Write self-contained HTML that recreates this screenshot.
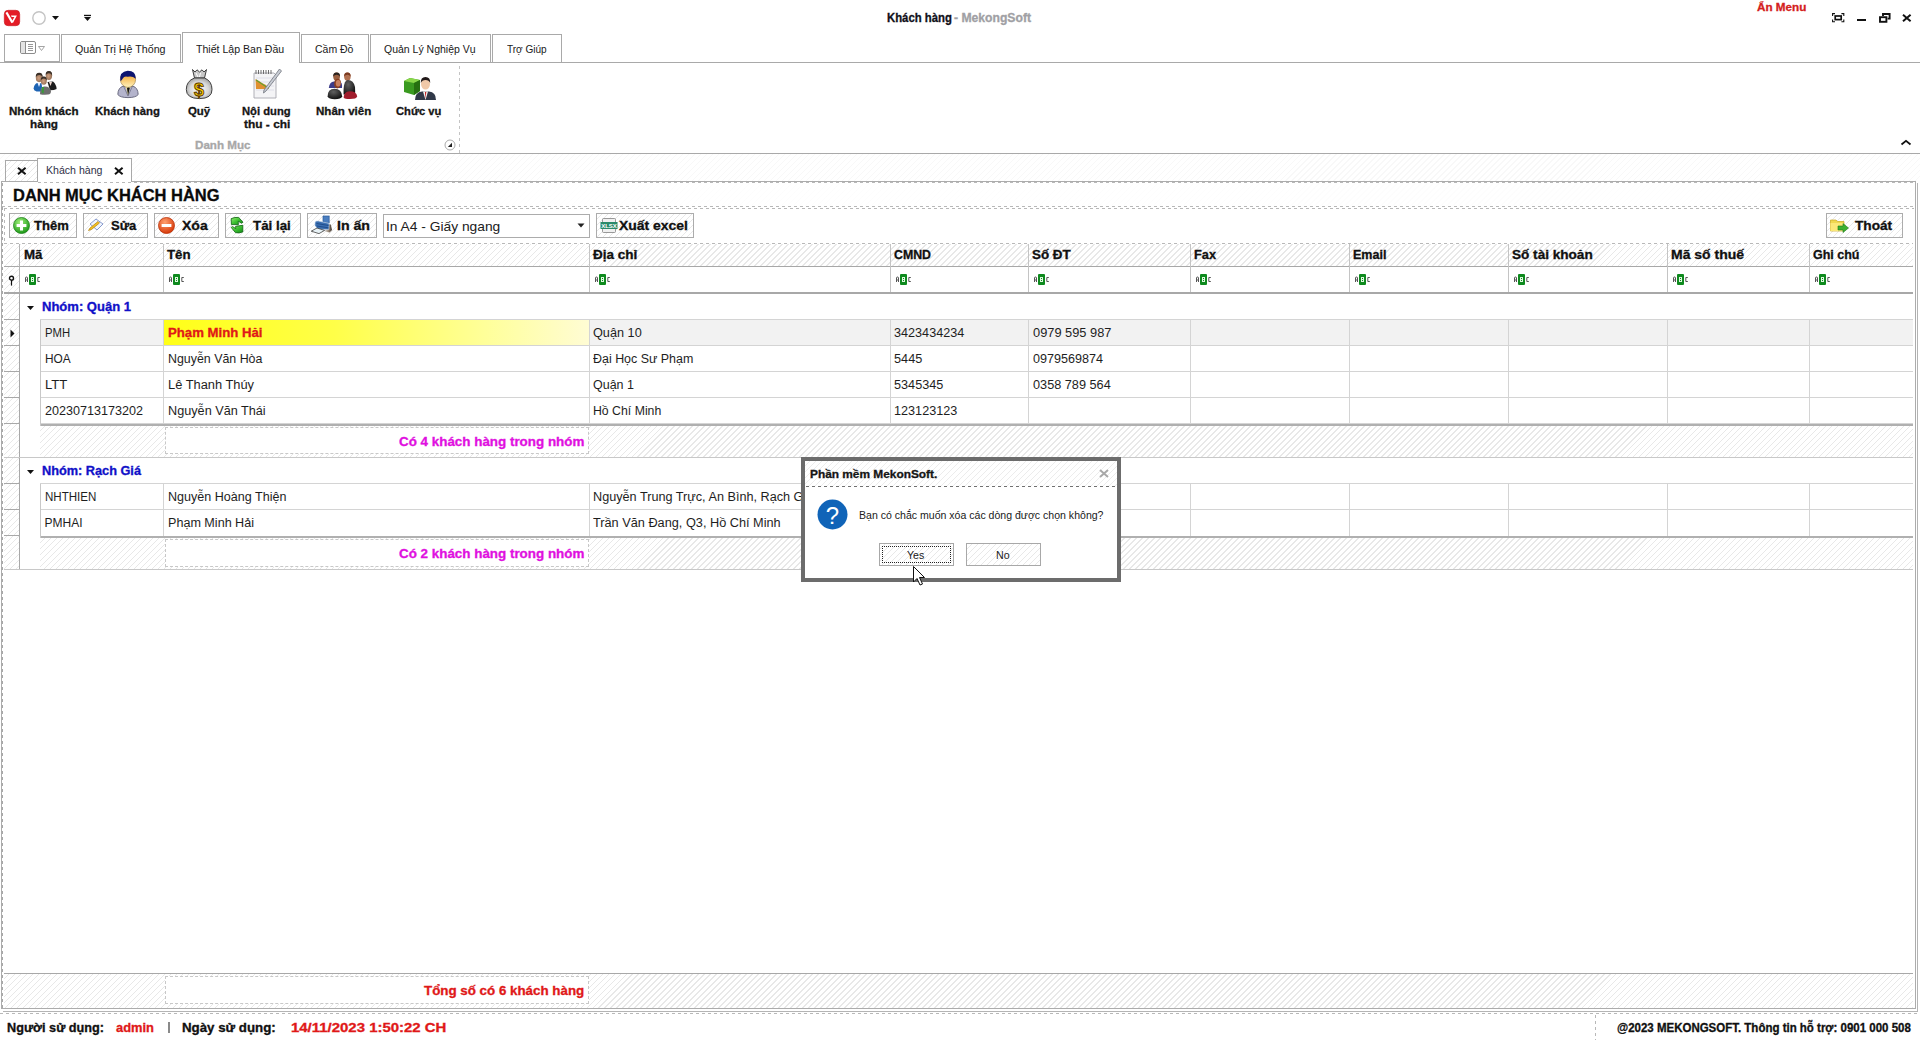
<!DOCTYPE html>
<html><head><meta charset="utf-8">
<style>
html,body{margin:0;padding:0}
body{width:1920px;height:1040px;position:relative;overflow:hidden;background:#fff;font-family:"Liberation Sans",sans-serif}
.t{position:absolute;white-space:pre;font-family:"Liberation Sans",sans-serif}
.b{position:absolute;box-sizing:border-box}
.hatch{background:repeating-linear-gradient(135deg,#ffffff 0px,#ffffff 3.1px,#e8e8e8 3.1px,#e8e8e8 4.24px)}
.hatchl{background:repeating-linear-gradient(135deg,#ffffff 0px,#ffffff 3.4px,#f8f8f8 3.4px,#f8f8f8 4.24px)}
.hl{position:absolute;height:1px}
.vl{position:absolute;width:1px}
.dh{position:absolute;height:1px;background:repeating-linear-gradient(90deg,#b8b8b8 0 3px,transparent 3px 6px)}
.dv{position:absolute;width:1px;background:repeating-linear-gradient(180deg,#b8b8b8 0 3px,transparent 3px 6px)}
svg{position:absolute;overflow:visible}
</style></head>
<body>
<!-- ================= TITLE BAR ================= -->
<svg style="left:4px;top:10px" width="16" height="16" viewBox="0 0 16 16">
  <rect x="0.3" y="0.3" width="15.4" height="15.4" rx="3.8" fill="#e41c26" stroke="#c8141c" stroke-width="0.6"/>
  <path d="M2.4 2.4 L8.4 12.6" fill="none" stroke="#fff" stroke-width="2.1"/>
  <path d="M7 5.6 H12.9 L8.9 12.9 L7.9 11.2 L10.4 7.1 H7.6 Z" fill="#fff"/>
</svg>
<svg style="left:32px;top:11px" width="14" height="14" viewBox="0 0 14 14">
  <circle cx="7" cy="7" r="6.2" fill="none" stroke="#c4c4c4" stroke-width="1.4"/>
</svg>
<svg style="left:52px;top:16px" width="8" height="5" viewBox="0 0 8 5"><path d="M0 0 H7 L3.5 4 Z" fill="#111"/></svg>
<svg style="left:84px;top:14px" width="8" height="8" viewBox="0 0 8 8"><rect x="0" y="0.8" width="7" height="1.3" fill="#111"/><path d="M0 3 H7 L3.5 7 Z" fill="#111"/></svg>
<!-- window buttons -->
<svg style="left:1832px;top:13px" width="13" height="10" viewBox="0 0 13 10">
  <path d="M0.6 3 V0.6 H3 M9.4 0.6 H11.8 V3 M11.8 6.4 V8.8 H9.4 M3 8.8 H0.6 V6.4" fill="none" stroke="#111" stroke-width="1.1"/>
  <rect x="3.2" y="3" width="6" height="3.6" fill="none" stroke="#111" stroke-width="1.7"/>
</svg>
<div class="b" style="left:1857px;top:19px;width:9px;height:2px;background:#111"></div>
<svg style="left:1879px;top:13px" width="12" height="10" viewBox="0 0 12 10">
  <rect x="1" y="4.2" width="6.4" height="4.6" fill="none" stroke="#111" stroke-width="1.9"/>
  <path d="M4 3 V1 H10.6 V5.6 H8.6" fill="none" stroke="#111" stroke-width="1.9"/>
</svg>
<svg style="left:1902px;top:14px" width="10" height="8" viewBox="0 0 10 8"><path d="M1 0.8 L8.6 7.2 M8.6 0.8 L1 7.2" stroke="#111" stroke-width="2"/></svg>

<!-- ================= RIBBON TABS ================= -->
<div class="hl" style="left:0;top:62px;width:1920px;background:#a9a9a9"></div>
<div class="b" style="left:4px;top:34px;width:56px;height:28px;border:1px solid #a9a9a9;background:#fff"></div>
<svg style="left:20px;top:41px" width="26" height="14" viewBox="0 0 26 14">
  <rect x="0.5" y="0.5" width="15" height="12" rx="1.5" fill="#fff" stroke="#8c8c8c"/>
  <rect x="1" y="1" width="4" height="11" fill="#e4e4e4"/>
  <path d="M5.5 1 V12.5" stroke="#8c8c8c"/>
  <path d="M8 3.5 H13 M8 5.5 H13 M8 7.5 H13 M8 9.5 H13" stroke="#8c8c8c" stroke-width="0.9"/>
  <path d="M18.5 5.5 H24.5 L21.5 9.5 Z" fill="#fff" stroke="#9a9a9a" stroke-width="0.9"/>
</svg>
<div class="b" style="left:61px;top:34px;width:120px;height:29px;border:1px solid #a9a9a9;border-bottom:none;background:#fff"></div>
<div class="b" style="left:182px;top:32px;width:118px;height:31px;border:1px solid #a9a9a9;border-bottom:none;background:#fff"></div>
<div class="b" style="left:301px;top:34px;width:68px;height:29px;border:1px solid #a9a9a9;border-bottom:none;background:#fff"></div>
<div class="b" style="left:370px;top:34px;width:121px;height:29px;border:1px solid #a9a9a9;border-bottom:none;background:#fff"></div>
<div class="b" style="left:492px;top:34px;width:70px;height:29px;border:1px solid #a9a9a9;border-bottom:none;background:#fff"></div>
<div class="hl" style="left:0;top:62px;width:182px;background:#a9a9a9"></div>
<div class="hl" style="left:300px;top:62px;width:1620px;background:#a9a9a9"></div>

<!-- ================= RIBBON CONTENT ================= -->
<!-- Nhom khach hang icon -->
<svg style="left:33px;top:70px" width="25" height="25" viewBox="0 0 25 25">
  <defs><radialGradient id="face" cx="0.45" cy="0.55" r="0.6"><stop offset="0" stop-color="#d0a080"/><stop offset="1" stop-color="#8a6850"/></radialGradient></defs>
  <path d="M14.5 12 L20 11.5 Q23.5 14.5 23.6 19 Q21.5 20.3 17 20.3 Z" fill="#1c1c1c"/>
  <path d="M16 12 L17.5 16 L19 12 Z" fill="#f0d8d0"/>
  <ellipse cx="15.9" cy="5.6" rx="3.2" ry="4.4" fill="url(#face)"/>
  <path d="M12.7 5 Q12.5 1 15.9 1 Q19.4 1 19.1 5.5 Q18 3 15.8 3.2 Q13.8 3.3 12.7 5Z" fill="#3a3028"/>
  <path d="M0.6 18.5 Q1.2 14 4 13 L8.5 13 Q9.5 16.5 8.5 21.5 L3.5 21.5 Q0.5 20.5 0.6 18.5Z" fill="#1e64b4"/>
  <path d="M4.5 13 L6 17 L7.5 13Z" fill="#e8f0ff"/>
  <ellipse cx="6.2" cy="7.6" rx="3.4" ry="4.6" fill="url(#face)"/>
  <path d="M2.8 7 Q2.6 2.8 6.2 2.8 Q9.8 2.8 9.6 7.2 Q8.5 4.8 6.2 5 Q4 5 2.8 7Z" fill="#3a3028"/>
  <path d="M7 24.2 Q6.8 17.5 11 16.5 Q17 16 18 21 Q18.2 24 15 24.6 Q10 25 7 24.2Z" fill="#6e6e6e"/>
  <path d="M9 17 L11.2 17 L10.6 23.5 L8.6 22.5 Z" fill="#3a9a3a"/>
  <ellipse cx="10.8" cy="10.8" rx="3" ry="4" fill="url(#face)"/>
  <path d="M7.8 10.2 Q7.7 6.6 10.8 6.6 Q14 6.6 13.8 10.4 Q12.8 8.4 10.8 8.5 Q8.8 8.6 7.8 10.2Z" fill="#3a3028"/>
</svg>
<!-- Khach hang icon -->
<svg style="left:117px;top:70px" width="22" height="28" viewBox="0 0 22 28">
  <defs><linearGradient id="khf" x1="0" y1="0" x2="0" y2="1"><stop offset="0" stop-color="#f09818"/><stop offset="1" stop-color="#fff4c0"/></linearGradient></defs>
  <path d="M0.8 24.5 Q1 17.5 6.5 16 L15.5 16 Q21 17.5 21.2 24.5 Q19 27.6 11 27.6 Q3 27.6 0.8 24.5Z" fill="#b4b4cc" stroke="#505068" stroke-width="0.8"/>
  <path d="M6.5 16 L11 26 L15.5 16" fill="none" stroke="#6a6a80" stroke-width="0.7"/>
  <path d="M8.5 16 L11 25 L13.5 16 Z" fill="#f4e8a0"/>
  <path d="M10 18 L11 25.5 L12.8 18 L11.6 17 Z" fill="#151515"/>
  <ellipse cx="11" cy="9.6" rx="7.6" ry="7.8" fill="url(#khf)" stroke="#806020" stroke-width="0.5"/>
  <path d="M3.4 11 Q2 1.5 10.8 0.8 Q19 1 18.8 8.8 Q15 5.4 10.5 6.8 Q7.2 5.8 5.6 8.8 Q4.8 10.5 3.4 11Z" fill="#0c1470"/>
</svg>
<!-- Quy icon -->
<svg style="left:186px;top:68px" width="27" height="32" viewBox="0 0 27 32">
  <defs><radialGradient id="bagg" cx="0.5" cy="0.55" r="0.6"><stop offset="0" stop-color="#ffffff"/><stop offset="0.6" stop-color="#d8d8d8"/><stop offset="1" stop-color="#9a9a9a"/></radialGradient></defs>
  <path d="M6.5 1.5 L9 4 L11 1.8 L13.5 4 L16 1.8 L18 4 L20.5 1.5 L18.5 10 L8.5 10 Z" fill="#c8c8c8" stroke="#404040" stroke-width="1"/>
  <path d="M10 5 L12 9 M14.5 5 L13.5 9" stroke="#ffffff" stroke-width="1"/>
  <path d="M8.5 10 Q0.3 13 0.3 21.5 Q0.3 30.5 13.5 30.6 Q26.2 30.5 26 21.5 Q26 13 18.5 10 Z" fill="url(#bagg)" stroke="#404040" stroke-width="1"/>
  <text x="13" y="27.8" font-family="Liberation Sans" font-weight="700" font-size="18" text-anchor="middle" fill="#ffd000" stroke="#5a3800" stroke-width="0.9">$</text>
</svg>
<!-- Noi dung thu chi icon -->
<svg style="left:253px;top:68px" width="30" height="32" viewBox="0 0 30 32">
  <path d="M1 5 H21 L23 7 V30 H1 Z" fill="#f4f4f6" stroke="#a8a8b0" stroke-width="0.9"/>
  <path d="M3 2 V6 M5.5 2 V6 M8 2 V6 M10.5 2 V6 M13 2 V6 M15.5 2 V6 M18 2 V6" stroke="#606060" stroke-width="0.9"/>
  <path d="M3 10 H21 M3 14 H21 M3 18 H21 M3 22 H21" stroke="#d0d0e0" stroke-width="0.6"/>
  <path d="M2.5 11 L3 21 L16 21 L13 17 L9 15 L6 13 Z" fill="#e09030"/>
  <path d="M3 12 L6 14 L9 16 L12 18 L16 20" stroke="#60a030" stroke-width="1.1" fill="none"/>
  <path d="M26.5 1 L28.5 3 L13 23 L10.5 25 L11 22 Z" fill="#c8ccd4" stroke="#70747c" stroke-width="0.8"/>
</svg>
<!-- Nhan vien icon -->
<svg style="left:327px;top:72px" width="32" height="28" viewBox="0 0 32 28">
  <defs><radialGradient id="nvb" cx="0.4" cy="0.3" r="0.8"><stop offset="0" stop-color="#606060"/><stop offset="1" stop-color="#080808"/></radialGradient></defs>
  <ellipse cx="9.6" cy="4.6" rx="3.4" ry="4.2" fill="#9a6040"/>
  <path d="M6.2 4.5 Q6 0.4 9.6 0.4 Q13.2 0.4 13 4.6 Q11.5 2.6 9.6 2.8 Q7.5 2.8 6.2 4.5Z" fill="#2a2420"/>
  <path d="M1.8 16 Q2.5 10 7 9.6 L13 9.6 Q15.5 11 15 16 Z" fill="#3c3c8a"/>
  <ellipse cx="20.4" cy="4.6" rx="3.3" ry="4.2" fill="#b07050"/>
  <path d="M17.1 4.2 Q17 0.4 20.4 0.4 Q23.8 0.4 23.6 4.6 Q22 2.5 20.4 2.7 Q18.6 2.8 17.1 4.2Z" fill="#7a3a20"/>
  <path d="M16.6 22.5 Q16 8.5 21 8 Q26.5 8 28 15 Q28.6 20 27.5 23 Z" fill="url(#nvb)"/>
  <path d="M16.6 25.5 Q17 19.5 22.5 19.2 Q29.5 19 30.2 24.5 Q29.5 27 23 27 Q17.5 27 16.6 25.5Z" fill="#a01c2c"/>
  <path d="M7.2 13 Q6.8 7 10.5 6.8 Q14.2 7 14 11.5 Q13.5 16 10 16.5 Q7.5 16 7.2 13Z" fill="#8a4020"/>
  <ellipse cx="11.2" cy="11.2" rx="2.4" ry="3.2" fill="#c88060"/>
  <path d="M0.6 24.6 Q0.5 17 7.5 16.8 Q14.8 17 15.2 24.6 Q14 27.2 7.8 27.2 Q1.8 27.2 0.6 24.6Z" fill="url(#nvb)"/>
</svg>
<!-- Chuc vu icon -->
<svg style="left:403px;top:75px" width="33" height="26" viewBox="0 0 33 26">
  <path d="M1 6 L7 3 L17 5 L17 16 L11 20 L1 17 Z" fill="#3a9a20"/>
  <path d="M1 6 L7 3 L17 5 L11 8 Z" fill="#8ad84a"/>
  <path d="M11 8 L17 5 L17 16 L11 20 Z" fill="#267010"/>
  <path d="M12 25 Q12 17 19 16.5 L26 16.5 Q33 17 33 25 Z" fill="#303848"/>
  <path d="M20 16.5 L22.5 25 L25 16.5 Z" fill="#f4f4f4"/>
  <path d="M22 17 L22.5 24 L23.3 17 Z" fill="#c01818"/>
  <ellipse cx="22.5" cy="9" rx="4.5" ry="5.6" fill="#f0c8a8"/>
  <path d="M17.8 8 Q17.5 2 22.5 2 Q27.5 2 27.2 8 Q26 5 22.5 5 Q19 5 17.8 8Z" fill="#201818"/>
</svg>
<!-- launcher -->
<svg style="left:444px;top:139px" width="12" height="12" viewBox="0 0 12 12">
  <circle cx="6" cy="6" r="5" fill="#fff" stroke="#a0a0a0" stroke-width="0.9"/>
  <path d="M3.8 8 H8 V3.8 Z" fill="#222"/>
</svg>
<div class="dv" style="left:459px;top:66px;height:87px;background:repeating-linear-gradient(180deg,#c4c4c4 0 3px,transparent 3px 6px)"></div>
<svg style="left:1901px;top:140px" width="10" height="5" viewBox="0 0 10 5"><path d="M0.5 4.5 L5 0.8 L9.5 4.5" fill="none" stroke="#111" stroke-width="1.8"/></svg>
<div class="hl" style="left:0;top:153px;width:1920px;background:#a9a9a9"></div>

<!-- ================= DOC AREA BG ================= -->
<div class="b hatchl" style="left:0;top:154px;width:1920px;height:27px"></div>
<div class="b hatch" style="left:5px;top:160px;width:33px;height:22px;border:1px solid #a9a9a9;border-bottom:none"></div>
<svg style="left:17px;top:167px" width="10" height="8" viewBox="0 0 10 8"><path d="M1 0.8 L8.6 7.2 M8.6 0.8 L1 7.2" stroke="#111" stroke-width="2"/></svg>
<div class="b" style="left:37px;top:158px;width:95px;height:25px;border:1px solid #a9a9a9;border-bottom:none;background:#fff"></div>
<svg style="left:114px;top:167px" width="10" height="8" viewBox="0 0 10 8"><path d="M1 0.8 L8.6 7.2 M8.6 0.8 L1 7.2" stroke="#111" stroke-width="2"/></svg>

<!-- ================= PANEL ================= -->
<div class="b" style="left:3px;top:183px;width:1915px;height:829px;border-right:1px solid #b4b4b4;border-bottom:1px solid #b4b4b4"></div>
<div class="b" style="left:1px;top:181px;width:1915px;height:828px;border:1px solid #acacac;background:#fff"></div>
<div class="hl" style="left:1px;top:181px;width:37px;background:#acacac"></div>
<div class="hl" style="left:131px;top:181px;width:1785px;background:#acacac"></div>
<div class="hl" style="left:38px;top:181px;width:93px;background:#fff"></div>
<div class="b hatchl" style="left:2px;top:182px;width:1913px;height:24px;opacity:0.3"></div>
<div class="dh" style="left:38px;top:182px;width:1876px"></div>
<div class="dh" style="left:2px;top:206px;width:1912px"></div>
<div class="dh" style="left:4px;top:208px;width:1910px"></div>
<div class="dv" style="left:4px;top:208px;height:35px"></div>
<div class="dv" style="left:2px;top:183px;height:825px;background:repeating-linear-gradient(180deg,#a8a8a8 0 3px,transparent 3px 6px)"></div>


<!-- toolbar buttons -->
<div class="b hatch" style="left:9px;top:213px;width:68px;height:25px;border:1px solid #acacac"></div>
<div class="b hatch" style="left:83px;top:213px;width:65px;height:25px;border:1px solid #acacac"></div>
<div class="b hatch" style="left:154px;top:213px;width:65px;height:25px;border:1px solid #acacac"></div>
<div class="b hatch" style="left:225px;top:213px;width:76px;height:25px;border:1px solid #acacac"></div>
<div class="b hatch" style="left:307px;top:213px;width:70px;height:25px;border:1px solid #acacac"></div>
<div class="b" style="left:383px;top:214px;width:207px;height:24px;border:1px solid #acacac;background:#fff"></div>
<svg style="left:577px;top:223px" width="8" height="5" viewBox="0 0 8 5"><path d="M0.5 0.5 H7.5 L4 4.5 Z" fill="#222"/></svg>
<div class="b hatch" style="left:596px;top:213px;width:98px;height:25px;border:1px solid #acacac"></div>
<div class="b hatch" style="left:1826px;top:213px;width:77px;height:25px;border:1px solid #acacac"></div>
<!-- toolbar icons -->
<svg style="left:13px;top:217px" width="17" height="17" viewBox="0 0 17 17">
  <defs><radialGradient id="gg" cx="0.4" cy="0.3" r="0.7"><stop offset="0" stop-color="#9ef07a"/><stop offset="1" stop-color="#1f9a1a"/></radialGradient></defs>
  <circle cx="8.5" cy="8.5" r="8" fill="url(#gg)" stroke="#1c8018" stroke-width="0.8"/>
  <path d="M8.5 3.6 V13.4 M3.6 8.5 H13.4" stroke="#fff" stroke-width="3"/>
</svg>
<svg style="left:87px;top:218px" width="17" height="14" viewBox="0 0 17 14">
  <path d="M3 6 L9 1 L16 6 L10 12 Z" fill="#f0f4fc" stroke="#7a90c8" stroke-width="0.9"/>
  <path d="M1.5 12.5 L3 10 L11 3.5 L12.5 5 L4.5 11.5 Z" fill="#f4c020" stroke="#b08010" stroke-width="0.7"/>
</svg>
<svg style="left:158px;top:217px" width="17" height="17" viewBox="0 0 17 17">
  <defs><radialGradient id="rg" cx="0.4" cy="0.3" r="0.7"><stop offset="0" stop-color="#ffa070"/><stop offset="1" stop-color="#d83a0a"/></radialGradient></defs>
  <circle cx="8.5" cy="8.5" r="8" fill="url(#rg)" stroke="#b83008" stroke-width="0.8"/>
  <path d="M3.6 8.5 H13.4" stroke="#fff" stroke-width="3"/>
</svg>
<svg style="left:226px;top:213px" width="24" height="24" viewBox="0 0 24 24">
  <defs><linearGradient id="rfg" x1="0" y1="0" x2="1" y2="1"><stop offset="0" stop-color="#9af078"/><stop offset="0.5" stop-color="#3cc030"/><stop offset="1" stop-color="#128a18"/></linearGradient></defs>
  <path d="M5.2 5.6 Q9 4 12.6 4.4 L17 9.2 L15.6 10.3 L12.2 8.2 L12.4 11.6 L5.4 11.6 Z" fill="url(#rfg)" stroke="#0c6010" stroke-width="0.8"/>
  <path d="M9.6 13.3 L16.8 12.3 L16.8 18.9 Q13 20.6 9.4 19.6 L5.2 14.4 L6.6 13.6 L9.8 15.6 Z" fill="url(#rfg)" stroke="#0c6010" stroke-width="0.8"/>
</svg>
<svg style="left:308px;top:213px" width="26" height="22" viewBox="0 0 26 22">
  <defs><linearGradient id="prs" x1="0" y1="0" x2="1" y2="0"><stop offset="0" stop-color="#e8e8e8"/><stop offset="0.5" stop-color="#a09080"/><stop offset="1" stop-color="#3a3028"/></linearGradient></defs>
  <path d="M15 3 H21.2 V10 L15 9 Z" fill="#4a7ec0" stroke="#2a5a98" stroke-width="0.7"/>
  <path d="M16.5 10.5 L22.8 11.6 L24 17 L21.6 19.6 L16.6 18.6 Z" fill="url(#prs)"/>
  <path d="M7 9.2 Q8 7.6 10.2 8 L21.2 10.4 L20.8 16.6 L9.6 16.2 L7 12.4 Z" fill="#3a6eb0" stroke="#c8d8ec" stroke-width="0.6"/>
  <path d="M8.5 10.5 L20.5 12.5 M8.8 13 L20.5 14.8" stroke="#1e4a88" stroke-width="0.9"/>
  <path d="M3.2 18.2 L9 15 L16.6 17.4 L11 20.6 Z" fill="#e8f2f6" stroke="#404040" stroke-width="0.8"/>
</svg>
<svg style="left:600px;top:218px" width="18" height="15" viewBox="0 0 18 15">
  <rect x="2.5" y="0.5" width="13" height="14" rx="1" fill="#f0f0f0" stroke="#808080" stroke-width="0.8"/>
  <rect x="0.5" y="4" width="17" height="7" fill="#2a8a6a"/>
  <text x="9" y="10" font-family="Liberation Sans" font-weight="700" font-size="6" text-anchor="middle" fill="#fff">XLSX</text>
</svg>
<svg style="left:1830px;top:218px" width="20" height="16" viewBox="0 0 20 16">
  <path d="M0.5 2 H6 L7.5 3.5 H14 V13 H0.5 Z" fill="#f0d850" stroke="#c8a820" stroke-width="0.7"/>
  <path d="M0.5 5 H14 V13 H0.5 Z" fill="#fce878"/>
  <path d="M8 8 H13 V5.5 L18.5 10 L13 14.5 V12 H8 Z" fill="#3cb030" stroke="#1c7a18" stroke-width="0.6"/>
</svg>

<!-- ================= GRID ================= -->
<div class="dh" style="left:4px;top:243px;width:1909px"></div>
<div class="b hatch" style="left:4px;top:244px;width:1909px;height:22px"></div>
<div class="hl" style="left:4px;top:266px;width:1909px;background:#a8a8a8"></div>
<!-- header column separators -->
<div class="vl" style="left:19px;top:244px;height:49px;background:#b4b4b4"></div>
<div class="vl" style="left:163px;top:244px;height:49px;background:#c4c4c4"></div>
<div class="vl" style="left:589px;top:244px;height:49px;background:#c4c4c4"></div>
<div class="vl" style="left:890px;top:244px;height:49px;background:#c4c4c4"></div>
<div class="vl" style="left:1028px;top:244px;height:49px;background:#c4c4c4"></div>
<div class="vl" style="left:1190px;top:244px;height:49px;background:#c4c4c4"></div>
<div class="vl" style="left:1349px;top:244px;height:49px;background:#c4c4c4"></div>
<div class="vl" style="left:1508px;top:244px;height:49px;background:#c4c4c4"></div>
<div class="vl" style="left:1667px;top:244px;height:49px;background:#c4c4c4"></div>
<div class="vl" style="left:1809px;top:244px;height:49px;background:#c4c4c4"></div>
<!-- filter row indicator hatch -->
<div class="b hatch" style="left:4px;top:267px;width:15px;height:25px"></div>
<svg style="left:8px;top:275px" width="7" height="11" viewBox="0 0 7 11"><circle cx="3.5" cy="3.2" r="2" fill="#fff" stroke="#111" stroke-width="1.4"/><path d="M3.5 5 V10.6" stroke="#111" stroke-width="1.2"/></svg>
<svg style="left:25px;top:274px" width="16" height="11" viewBox="0 0 16 11"><path d="M0.5 8 V4 Q0.5 3 1.5 3 Q2.5 3 2.5 4 V8 M0.5 6 H2.5" fill="none" stroke="#555" stroke-width="1"/><rect x="4" y="0" width="7" height="11" rx="1" fill="#0e8a1e"/><rect x="6" y="3" width="3" height="5" fill="#dff8df"/><rect x="7" y="4" width="1" height="1" fill="#0e8a1e"/><rect x="7" y="6" width="1" height="1" fill="#0e8a1e"/><path d="M14.8 3.5 H12.8 V7.5 H14.8" fill="none" stroke="#555" stroke-width="1"/></svg>
<svg style="left:169px;top:274px" width="16" height="11" viewBox="0 0 16 11"><path d="M0.5 8 V4 Q0.5 3 1.5 3 Q2.5 3 2.5 4 V8 M0.5 6 H2.5" fill="none" stroke="#555" stroke-width="1"/><rect x="4" y="0" width="7" height="11" rx="1" fill="#0e8a1e"/><rect x="6" y="3" width="3" height="5" fill="#dff8df"/><rect x="7" y="4" width="1" height="1" fill="#0e8a1e"/><rect x="7" y="6" width="1" height="1" fill="#0e8a1e"/><path d="M14.8 3.5 H12.8 V7.5 H14.8" fill="none" stroke="#555" stroke-width="1"/></svg>
<svg style="left:595px;top:274px" width="16" height="11" viewBox="0 0 16 11"><path d="M0.5 8 V4 Q0.5 3 1.5 3 Q2.5 3 2.5 4 V8 M0.5 6 H2.5" fill="none" stroke="#555" stroke-width="1"/><rect x="4" y="0" width="7" height="11" rx="1" fill="#0e8a1e"/><rect x="6" y="3" width="3" height="5" fill="#dff8df"/><rect x="7" y="4" width="1" height="1" fill="#0e8a1e"/><rect x="7" y="6" width="1" height="1" fill="#0e8a1e"/><path d="M14.8 3.5 H12.8 V7.5 H14.8" fill="none" stroke="#555" stroke-width="1"/></svg>
<svg style="left:896px;top:274px" width="16" height="11" viewBox="0 0 16 11"><path d="M0.5 8 V4 Q0.5 3 1.5 3 Q2.5 3 2.5 4 V8 M0.5 6 H2.5" fill="none" stroke="#555" stroke-width="1"/><rect x="4" y="0" width="7" height="11" rx="1" fill="#0e8a1e"/><rect x="6" y="3" width="3" height="5" fill="#dff8df"/><rect x="7" y="4" width="1" height="1" fill="#0e8a1e"/><rect x="7" y="6" width="1" height="1" fill="#0e8a1e"/><path d="M14.8 3.5 H12.8 V7.5 H14.8" fill="none" stroke="#555" stroke-width="1"/></svg>
<svg style="left:1034px;top:274px" width="16" height="11" viewBox="0 0 16 11"><path d="M0.5 8 V4 Q0.5 3 1.5 3 Q2.5 3 2.5 4 V8 M0.5 6 H2.5" fill="none" stroke="#555" stroke-width="1"/><rect x="4" y="0" width="7" height="11" rx="1" fill="#0e8a1e"/><rect x="6" y="3" width="3" height="5" fill="#dff8df"/><rect x="7" y="4" width="1" height="1" fill="#0e8a1e"/><rect x="7" y="6" width="1" height="1" fill="#0e8a1e"/><path d="M14.8 3.5 H12.8 V7.5 H14.8" fill="none" stroke="#555" stroke-width="1"/></svg>
<svg style="left:1196px;top:274px" width="16" height="11" viewBox="0 0 16 11"><path d="M0.5 8 V4 Q0.5 3 1.5 3 Q2.5 3 2.5 4 V8 M0.5 6 H2.5" fill="none" stroke="#555" stroke-width="1"/><rect x="4" y="0" width="7" height="11" rx="1" fill="#0e8a1e"/><rect x="6" y="3" width="3" height="5" fill="#dff8df"/><rect x="7" y="4" width="1" height="1" fill="#0e8a1e"/><rect x="7" y="6" width="1" height="1" fill="#0e8a1e"/><path d="M14.8 3.5 H12.8 V7.5 H14.8" fill="none" stroke="#555" stroke-width="1"/></svg>
<svg style="left:1355px;top:274px" width="16" height="11" viewBox="0 0 16 11"><path d="M0.5 8 V4 Q0.5 3 1.5 3 Q2.5 3 2.5 4 V8 M0.5 6 H2.5" fill="none" stroke="#555" stroke-width="1"/><rect x="4" y="0" width="7" height="11" rx="1" fill="#0e8a1e"/><rect x="6" y="3" width="3" height="5" fill="#dff8df"/><rect x="7" y="4" width="1" height="1" fill="#0e8a1e"/><rect x="7" y="6" width="1" height="1" fill="#0e8a1e"/><path d="M14.8 3.5 H12.8 V7.5 H14.8" fill="none" stroke="#555" stroke-width="1"/></svg>
<svg style="left:1514px;top:274px" width="16" height="11" viewBox="0 0 16 11"><path d="M0.5 8 V4 Q0.5 3 1.5 3 Q2.5 3 2.5 4 V8 M0.5 6 H2.5" fill="none" stroke="#555" stroke-width="1"/><rect x="4" y="0" width="7" height="11" rx="1" fill="#0e8a1e"/><rect x="6" y="3" width="3" height="5" fill="#dff8df"/><rect x="7" y="4" width="1" height="1" fill="#0e8a1e"/><rect x="7" y="6" width="1" height="1" fill="#0e8a1e"/><path d="M14.8 3.5 H12.8 V7.5 H14.8" fill="none" stroke="#555" stroke-width="1"/></svg>
<svg style="left:1673px;top:274px" width="16" height="11" viewBox="0 0 16 11"><path d="M0.5 8 V4 Q0.5 3 1.5 3 Q2.5 3 2.5 4 V8 M0.5 6 H2.5" fill="none" stroke="#555" stroke-width="1"/><rect x="4" y="0" width="7" height="11" rx="1" fill="#0e8a1e"/><rect x="6" y="3" width="3" height="5" fill="#dff8df"/><rect x="7" y="4" width="1" height="1" fill="#0e8a1e"/><rect x="7" y="6" width="1" height="1" fill="#0e8a1e"/><path d="M14.8 3.5 H12.8 V7.5 H14.8" fill="none" stroke="#555" stroke-width="1"/></svg>
<svg style="left:1815px;top:274px" width="16" height="11" viewBox="0 0 16 11"><path d="M0.5 8 V4 Q0.5 3 1.5 3 Q2.5 3 2.5 4 V8 M0.5 6 H2.5" fill="none" stroke="#555" stroke-width="1"/><rect x="4" y="0" width="7" height="11" rx="1" fill="#0e8a1e"/><rect x="6" y="3" width="3" height="5" fill="#dff8df"/><rect x="7" y="4" width="1" height="1" fill="#0e8a1e"/><rect x="7" y="6" width="1" height="1" fill="#0e8a1e"/><path d="M14.8 3.5 H12.8 V7.5 H14.8" fill="none" stroke="#555" stroke-width="1"/></svg>
<div class="b" style="left:4px;top:292px;width:1909px;height:2px;background:#a8a8a8"></div>

<!-- row indicator column -->
<div class="b hatch" style="left:4px;top:294px;width:15px;height:276px"></div>
<div class="vl" style="left:19px;top:294px;height:276px;background:#a8a8a8"></div>
<div class="hl" style="left:4px;top:319px;width:15px;background:#a8a8a8"></div>
<div class="hl" style="left:4px;top:345px;width:15px;background:#a8a8a8"></div>
<div class="hl" style="left:4px;top:371px;width:15px;background:#a8a8a8"></div>
<div class="hl" style="left:4px;top:397px;width:15px;background:#a8a8a8"></div>
<div class="hl" style="left:4px;top:423px;width:15px;background:#a8a8a8"></div>
<div class="hl" style="left:4px;top:457px;width:15px;background:#a8a8a8"></div>
<div class="hl" style="left:4px;top:483px;width:15px;background:#a8a8a8"></div>
<div class="hl" style="left:4px;top:509px;width:15px;background:#a8a8a8"></div>
<div class="hl" style="left:4px;top:535px;width:15px;background:#a8a8a8"></div>
<svg style="left:10px;top:329px" width="5" height="9" viewBox="0 0 5 9"><path d="M0.5 0.5 L4.5 4.5 L0.5 8.5 Z" fill="#111"/></svg>
<!-- group arrows -->
<svg style="left:27px;top:306px" width="8" height="5" viewBox="0 0 8 5"><path d="M0 0 H7 L3.5 4 Z" fill="#111"/></svg>
<svg style="left:27px;top:470px" width="8" height="5" viewBox="0 0 8 5"><path d="M0 0 H7 L3.5 4 Z" fill="#111"/></svg>

<!-- data area: rows group 1 -->
<div class="b" style="left:40px;top:320px;width:1873px;height:26px;background:#f2f2f2"></div>
<div class="b" style="left:164px;top:320px;width:425px;height:26px;background:linear-gradient(90deg,#ffff18 0%,#ffff48 40%,#ffff98 75%,#fffcd4 100%)"></div>
<div class="hl" style="left:40px;top:319px;width:1873px;background:#d4d4d4"></div>
<div class="hl" style="left:40px;top:345px;width:1873px;background:#d4d4d4"></div>
<div class="hl" style="left:40px;top:371px;width:1873px;background:#d4d4d4"></div>
<div class="hl" style="left:40px;top:397px;width:1873px;background:#d4d4d4"></div>
<div class="hl" style="left:40px;top:423px;width:1873px;background:#d4d4d4"></div>
<div class="b" style="left:40px;top:424px;width:1873px;height:2px;background:#b0b0b0"></div>
<div class="hl" style="left:4px;top:457px;width:1909px;background:#c8c8c8"></div>
<div class="hl" style="left:40px;top:483px;width:1873px;background:#d4d4d4"></div>
<div class="hl" style="left:40px;top:509px;width:1873px;background:#d4d4d4"></div>
<div class="b" style="left:40px;top:536px;width:1873px;height:2px;background:#b0b0b0"></div>
<div class="hl" style="left:4px;top:569px;width:1909px;background:#c8c8c8"></div>
<div class="vl" style="left:163px;top:320px;height:104px;background:#d4d4d4"></div>
<div class="vl" style="left:163px;top:484px;height:52px;background:#d4d4d4"></div>
<div class="vl" style="left:589px;top:320px;height:104px;background:#d4d4d4"></div>
<div class="vl" style="left:589px;top:484px;height:52px;background:#d4d4d4"></div>
<div class="vl" style="left:890px;top:320px;height:104px;background:#d4d4d4"></div>
<div class="vl" style="left:890px;top:484px;height:52px;background:#d4d4d4"></div>
<div class="vl" style="left:1028px;top:320px;height:104px;background:#d4d4d4"></div>
<div class="vl" style="left:1028px;top:484px;height:52px;background:#d4d4d4"></div>
<div class="vl" style="left:1190px;top:320px;height:104px;background:#d4d4d4"></div>
<div class="vl" style="left:1190px;top:484px;height:52px;background:#d4d4d4"></div>
<div class="vl" style="left:1349px;top:320px;height:104px;background:#d4d4d4"></div>
<div class="vl" style="left:1349px;top:484px;height:52px;background:#d4d4d4"></div>
<div class="vl" style="left:1508px;top:320px;height:104px;background:#d4d4d4"></div>
<div class="vl" style="left:1508px;top:484px;height:52px;background:#d4d4d4"></div>
<div class="vl" style="left:1667px;top:320px;height:104px;background:#d4d4d4"></div>
<div class="vl" style="left:1667px;top:484px;height:52px;background:#d4d4d4"></div>
<div class="vl" style="left:1809px;top:320px;height:104px;background:#d4d4d4"></div>
<div class="vl" style="left:1809px;top:484px;height:52px;background:#d4d4d4"></div>
<div class="vl" style="left:40px;top:320px;height:137px;background:#c8c8c8"></div>
<div class="vl" style="left:40px;top:484px;height:85px;background:#c8c8c8"></div>

<!-- footers -->
<div class="b hatch" style="left:40px;top:426px;width:1873px;height:31px"></div>
<div class="b" style="left:165px;top:427px;width:424px;height:27px;background:#fff;border:1px dashed #c8c8c8"></div>
<div class="b hatch" style="left:40px;top:538px;width:1873px;height:31px"></div>
<div class="b" style="left:165px;top:539px;width:424px;height:28px;background:#fff;border:1px dashed #c8c8c8"></div>

<!-- total footer -->
<div class="hl" style="left:4px;top:973px;width:1909px;background:#a8a8a8"></div>
<div class="b hatch" style="left:4px;top:974px;width:1909px;height:34px"></div>
<div class="b" style="left:165px;top:976px;width:424px;height:28px;background:#fff;border:1px dashed #c8c8c8"></div>

<!-- ================= STATUS BAR ================= -->
<div class="dh" style="left:0;top:1013px;width:1920px"></div>
<div class="dv" style="left:1595px;top:1015px;height:25px"></div>
<div class="vl" style="left:168px;top:1022px;height:11px;background:#8a8a8a;width:2px"></div>

<div class="t" style="left:887.04px;top:12px;font-size:12px;font-weight:700;color:#101018;line-height:12px;-webkit-text-stroke:0.3px #101018;transform:scaleX(0.9436);transform-origin:0 0">Khách hàng</div>
<div class="t" style="left:954.29px;top:12px;font-size:12px;font-weight:700;color:#a0a0a4;line-height:12px;-webkit-text-stroke:0.3px #a0a0a4;transform:scaleX(1.0132);transform-origin:0 0">- MekongSoft</div>
<div class="t" style="left:1757.46px;top:2px;font-size:11px;font-weight:700;color:#d42020;line-height:11px;-webkit-text-stroke:0.3px #d42020;transform:scaleX(1.0613);transform-origin:0 0">Ẩn Menu</div>
<div class="t" style="left:74.82px;top:44px;font-size:11px;font-weight:400;color:#202020;line-height:11px;transform:scaleX(0.9694);transform-origin:0 0">Quản Trị Hệ Thống</div>
<div class="t" style="left:196.33px;top:44px;font-size:11px;font-weight:400;color:#202020;line-height:11px;transform:scaleX(0.9615);transform-origin:0 0">Thiết Lập Ban Đầu</div>
<div class="t" style="left:314.93px;top:44px;font-size:11px;font-weight:400;color:#202020;line-height:11px;transform:scaleX(0.9518);transform-origin:0 0">Cầm Đồ</div>
<div class="t" style="left:384.03px;top:44px;font-size:11px;font-weight:400;color:#202020;line-height:11px;transform:scaleX(0.9540);transform-origin:0 0">Quản Lý Nghiệp Vụ</div>
<div class="t" style="left:506.66px;top:44px;font-size:11px;font-weight:400;color:#202020;line-height:11px;transform:scaleX(0.9130);transform-origin:0 0">Trợ Giúp</div>
<div class="t" style="left:9.26px;top:106px;font-size:11px;font-weight:700;color:#151515;line-height:11px;-webkit-text-stroke:0.3px #151515;transform:scaleX(1.0528);transform-origin:0 0">Nhóm khách</div>
<div class="t" style="left:29.75px;top:119px;font-size:11px;font-weight:700;color:#151515;line-height:11px;-webkit-text-stroke:0.3px #151515;transform:scaleX(1.0654);transform-origin:0 0">hàng</div>
<div class="t" style="left:94.78px;top:106px;font-size:11px;font-weight:700;color:#151515;line-height:11px;-webkit-text-stroke:0.3px #151515;transform:scaleX(1.0325);transform-origin:0 0">Khách hàng</div>
<div class="t" style="left:187.57px;top:106px;font-size:11px;font-weight:700;color:#151515;line-height:11px;-webkit-text-stroke:0.3px #151515;transform:scaleX(1.0371);transform-origin:0 0">Quỹ</div>
<div class="t" style="left:242.29px;top:106px;font-size:11px;font-weight:700;color:#151515;line-height:11px;-webkit-text-stroke:0.3px #151515;transform:scaleX(1.0198);transform-origin:0 0">Nội dung</div>
<div class="t" style="left:243.84px;top:119px;font-size:11px;font-weight:700;color:#151515;line-height:11px;-webkit-text-stroke:0.3px #151515;transform:scaleX(1.0846);transform-origin:0 0">thu - chi</div>
<div class="t" style="left:315.56px;top:106px;font-size:11px;font-weight:700;color:#151515;line-height:11px;-webkit-text-stroke:0.3px #151515;transform:scaleX(1.0518);transform-origin:0 0">Nhân viên</div>
<div class="t" style="left:396.49px;top:106px;font-size:11px;font-weight:700;color:#151515;line-height:11px;-webkit-text-stroke:0.3px #151515;transform:scaleX(1.0170);transform-origin:0 0">Chức vụ</div>
<div class="t" style="left:194.86px;top:140px;font-size:11px;font-weight:700;color:#a8a8a8;line-height:11px;-webkit-text-stroke:0.3px #a8a8a8;transform:scaleX(1.0578);transform-origin:0 0">Danh Mục</div>
<div class="t" style="left:45.93px;top:165px;font-size:11px;font-weight:400;color:#303048;line-height:11px;transform:scaleX(0.9605);transform-origin:0 0">Khách hàng</div>
<div class="t" style="left:13.28px;top:188px;font-size:16px;font-weight:700;color:#0a0a0a;line-height:16px;-webkit-text-stroke:0.3px #0a0a0a;transform:scaleX(1.0280);transform-origin:0 0">DANH MỤC KHÁCH HÀNG</div>
<div class="t" style="left:34.24px;top:220px;font-size:12px;font-weight:700;color:#101010;line-height:12px;-webkit-text-stroke:0.3px #101010;transform:scaleX(1.0854);transform-origin:0 0">Thêm</div>
<div class="t" style="left:111.14px;top:220px;font-size:12px;font-weight:700;color:#101010;line-height:12px;-webkit-text-stroke:0.3px #101010;transform:scaleX(1.0845);transform-origin:0 0">Sửa</div>
<div class="t" style="left:181.93px;top:220px;font-size:12px;font-weight:700;color:#101010;line-height:12px;-webkit-text-stroke:0.3px #101010;transform:scaleX(1.1696);transform-origin:0 0">Xóa</div>
<div class="t" style="left:253.22px;top:220px;font-size:12px;font-weight:700;color:#101010;line-height:12px;-webkit-text-stroke:0.3px #101010;transform:scaleX(1.1098);transform-origin:0 0">Tải lại</div>
<div class="t" style="left:336.68px;top:220px;font-size:12px;font-weight:700;color:#101010;line-height:12px;-webkit-text-stroke:0.3px #101010;transform:scaleX(1.1779);transform-origin:0 0">In ấn</div>
<div class="t" style="left:619.19px;top:220px;font-size:12px;font-weight:700;color:#101010;line-height:12px;-webkit-text-stroke:0.3px #101010;transform:scaleX(1.1621);transform-origin:0 0">Xuất excel</div>
<div class="t" style="left:1854.91px;top:220px;font-size:12px;font-weight:700;color:#101010;line-height:12px;-webkit-text-stroke:0.3px #101010;transform:scaleX(1.1355);transform-origin:0 0">Thoát</div>
<div class="t" style="left:386.01px;top:220px;font-size:13px;font-weight:400;color:#202020;line-height:13px;transform:scaleX(1.0609);transform-origin:0 0">In A4 - Giấy ngang</div>
<div class="t" style="left:23.72px;top:249px;font-size:12px;font-weight:700;color:#101010;line-height:12px;-webkit-text-stroke:0.3px #101010;transform:scaleX(1.1097);transform-origin:0 0">Mã</div>
<div class="t" style="left:167.23px;top:249px;font-size:12px;font-weight:700;color:#101010;line-height:12px;-webkit-text-stroke:0.3px #101010;transform:scaleX(1.1057);transform-origin:0 0">Tên</div>
<div class="t" style="left:593.46px;top:249px;font-size:12px;font-weight:700;color:#101010;line-height:12px;-webkit-text-stroke:0.3px #101010;transform:scaleX(1.1243);transform-origin:0 0">Địa chỉ</div>
<div class="t" style="left:894.28px;top:249px;font-size:12px;font-weight:700;color:#101010;line-height:12px;-webkit-text-stroke:0.3px #101010;transform:scaleX(1.0278);transform-origin:0 0">CMND</div>
<div class="t" style="left:1032.12px;top:249px;font-size:12px;font-weight:700;color:#101010;line-height:12px;-webkit-text-stroke:0.3px #101010;transform:scaleX(1.1162);transform-origin:0 0">Số ĐT</div>
<div class="t" style="left:1194.06px;top:249px;font-size:12px;font-weight:700;color:#101010;line-height:12px;-webkit-text-stroke:0.3px #101010;transform:scaleX(1.0634);transform-origin:0 0">Fax</div>
<div class="t" style="left:1353.27px;top:249px;font-size:12px;font-weight:700;color:#101010;line-height:12px;-webkit-text-stroke:0.3px #101010;transform:scaleX(1.0432);transform-origin:0 0">Email</div>
<div class="t" style="left:1512.21px;top:249px;font-size:12px;font-weight:700;color:#101010;line-height:12px;-webkit-text-stroke:0.3px #101010;transform:scaleX(1.1311);transform-origin:0 0">Số tài khoản</div>
<div class="t" style="left:1671.48px;top:249px;font-size:12px;font-weight:700;color:#101010;line-height:12px;-webkit-text-stroke:0.3px #101010;transform:scaleX(1.1648);transform-origin:0 0">Mã số thuế</div>
<div class="t" style="left:1813.27px;top:249px;font-size:12px;font-weight:700;color:#101010;line-height:12px;-webkit-text-stroke:0.3px #101010;transform:scaleX(1.0387);transform-origin:0 0">Ghi chú</div>
<div class="t" style="left:42.24px;top:301px;font-size:12px;font-weight:700;color:#1010c8;line-height:12px;-webkit-text-stroke:0.3px #1010c8;transform:scaleX(1.0852);transform-origin:0 0">Nhóm: Quận 1</div>
<div class="t" style="left:42.26px;top:465px;font-size:12px;font-weight:700;color:#1010c8;line-height:12px;-webkit-text-stroke:0.3px #1010c8;transform:scaleX(1.0604);transform-origin:0 0">Nhóm: Rạch Giá</div>
<div class="t" style="left:44.64px;top:327px;font-size:12px;font-weight:400;color:#1e1e1e;line-height:12px;transform:scaleX(0.9411);transform-origin:0 0">PMH</div>
<div class="t" style="left:593.26px;top:327px;font-size:12px;font-weight:400;color:#1e1e1e;line-height:12px;transform:scaleX(1.0576);transform-origin:0 0">Quận 10</div>
<div class="t" style="left:894.26px;top:327px;font-size:12px;font-weight:400;color:#1e1e1e;line-height:12px;transform:scaleX(1.0532);transform-origin:0 0">3423434234</div>
<div class="t" style="left:1032.55px;top:327px;font-size:12px;font-weight:400;color:#1e1e1e;line-height:12px;transform:scaleX(1.0680);transform-origin:0 0">0979 595 987</div>
<div class="t" style="left:44.61px;top:353px;font-size:12px;font-weight:400;color:#1e1e1e;line-height:12px;transform:scaleX(0.9879);transform-origin:0 0">HOA</div>
<div class="t" style="left:167.58px;top:353px;font-size:12px;font-weight:400;color:#1e1e1e;line-height:12px;transform:scaleX(1.0328);transform-origin:0 0">Nguyễn Văn Hòa</div>
<div class="t" style="left:593.27px;top:353px;font-size:12px;font-weight:400;color:#1e1e1e;line-height:12px;transform:scaleX(1.0369);transform-origin:0 0">Đại Học Sư Phạm</div>
<div class="t" style="left:894.26px;top:353px;font-size:12px;font-weight:400;color:#1e1e1e;line-height:12px;transform:scaleX(1.0598);transform-origin:0 0">5445</div>
<div class="t" style="left:1032.57px;top:353px;font-size:12px;font-weight:400;color:#1e1e1e;line-height:12px;transform:scaleX(1.0487);transform-origin:0 0">0979569874</div>
<div class="t" style="left:44.53px;top:379px;font-size:12px;font-weight:400;color:#1e1e1e;line-height:12px;transform:scaleX(1.0952);transform-origin:0 0">LTT</div>
<div class="t" style="left:167.55px;top:379px;font-size:12px;font-weight:400;color:#1e1e1e;line-height:12px;transform:scaleX(1.0710);transform-origin:0 0">Lê Thanh Thúy</div>
<div class="t" style="left:593.27px;top:379px;font-size:12px;font-weight:400;color:#1e1e1e;line-height:12px;transform:scaleX(1.0413);transform-origin:0 0">Quận 1</div>
<div class="t" style="left:894.26px;top:379px;font-size:12px;font-weight:400;color:#1e1e1e;line-height:12px;transform:scaleX(1.0553);transform-origin:0 0">5345345</div>
<div class="t" style="left:1032.56px;top:379px;font-size:12px;font-weight:400;color:#1e1e1e;line-height:12px;transform:scaleX(1.0585);transform-origin:0 0">0358 789 564</div>
<div class="t" style="left:44.77px;top:405px;font-size:12px;font-weight:400;color:#1e1e1e;line-height:12px;transform:scaleX(1.0488);transform-origin:0 0">20230713173202</div>
<div class="t" style="left:167.56px;top:405px;font-size:12px;font-weight:400;color:#1e1e1e;line-height:12px;transform:scaleX(1.0560);transform-origin:0 0">Nguyễn Văn Thái</div>
<div class="t" style="left:593.28px;top:405px;font-size:12px;font-weight:400;color:#1e1e1e;line-height:12px;transform:scaleX(1.0239);transform-origin:0 0">Hồ Chí Minh</div>
<div class="t" style="left:894.26px;top:405px;font-size:12px;font-weight:400;color:#1e1e1e;line-height:12px;transform:scaleX(1.0536);transform-origin:0 0">123123123</div>
<div class="t" style="left:44.63px;top:491px;font-size:12px;font-weight:400;color:#1e1e1e;line-height:12px;transform:scaleX(0.9636);transform-origin:0 0">NHTHIEN</div>
<div class="t" style="left:167.57px;top:491px;font-size:12px;font-weight:400;color:#1e1e1e;line-height:12px;transform:scaleX(1.0459);transform-origin:0 0">Nguyễn Hoàng Thiện</div>
<div class="t" style="left:593.26px;top:491px;font-size:12px;font-weight:400;color:#1e1e1e;line-height:12px;transform:scaleX(1.0550);transform-origin:0 0">Nguyễn Trung Trực, An Bình, Rạch Giá</div>
<div class="t" style="left:44.60px;top:517px;font-size:12px;font-weight:400;color:#1e1e1e;line-height:12px">PMHAI</div>
<div class="t" style="left:167.57px;top:517px;font-size:12px;font-weight:400;color:#1e1e1e;line-height:12px;transform:scaleX(1.0484);transform-origin:0 0">Phạm Minh Hải</div>
<div class="t" style="left:593.26px;top:517px;font-size:12px;font-weight:400;color:#1e1e1e;line-height:12px;transform:scaleX(1.0605);transform-origin:0 0">Trần Văn Đang, Q3, Hồ Chí Minh</div>
<div class="t" style="left:167.53px;top:327px;font-size:12px;font-weight:700;color:#e01818;line-height:12px;-webkit-text-stroke:0.3px #e01818;transform:scaleX(1.0975);transform-origin:0 0">Phạm Minh Hải</div>
<div class="t" style="left:398.62px;top:436px;font-size:12px;font-weight:700;color:#e010e0;line-height:12px;-webkit-text-stroke:0.3px #e010e0;transform:scaleX(1.1165);transform-origin:0 0">Có 4 khách hàng trong nhóm</div>
<div class="t" style="left:398.62px;top:548px;font-size:12px;font-weight:700;color:#e010e0;line-height:12px;-webkit-text-stroke:0.3px #e010e0;transform:scaleX(1.1165);transform-origin:0 0">Có 2 khách hàng trong nhóm</div>
<div class="t" style="left:423.52px;top:985px;font-size:12px;font-weight:700;color:#e01818;line-height:12px;-webkit-text-stroke:0.3px #e01818;transform:scaleX(1.1123);transform-origin:0 0">Tổng số có 6 khách hàng</div>
<div class="t" style="left:7.26px;top:1022px;font-size:12px;font-weight:700;color:#101010;line-height:12px;-webkit-text-stroke:0.3px #101010;transform:scaleX(1.0554);transform-origin:0 0">Người sử dụng:</div>
<div class="t" style="left:116.25px;top:1022px;font-size:12px;font-weight:700;color:#e01818;line-height:12px;-webkit-text-stroke:0.3px #e01818;transform:scaleX(1.0752);transform-origin:0 0">admin</div>
<div class="t" style="left:182.23px;top:1022px;font-size:12px;font-weight:700;color:#101010;line-height:12px;-webkit-text-stroke:0.3px #101010;transform:scaleX(1.1062);transform-origin:0 0">Ngày sử dụng:</div>
<div class="t" style="left:291.43px;top:1022px;font-size:12px;font-weight:700;color:#e01818;line-height:12px;-webkit-text-stroke:0.3px #e01818;transform:scaleX(1.2455);transform-origin:0 0">14/11/2023 1:50:22 CH</div>
<div class="t" style="left:1617.33px;top:1022px;font-size:12px;font-weight:700;color:#101010;line-height:12px;-webkit-text-stroke:0.3px #101010;transform:scaleX(0.9571);transform-origin:0 0">@2023 MEKONGSOFT. Thông tin hỗ trợ: 0901 000 508</div>

<!-- ================= DIALOG ================= -->
<div class="b" style="left:801px;top:457px;width:320px;height:125px;border:4px solid #6c6c6c;background:#fff"></div>
<div class="b hatchl" style="left:805px;top:461px;width:312px;height:25px;background:repeating-linear-gradient(135deg,#ffffff 0px,#ffffff 3.1px,#ececec 3.1px,#ececec 4.24px)"></div>
<div class="dh" style="left:806px;top:486px;width:309px;background:repeating-linear-gradient(90deg,#707070 0 3px,transparent 3px 6px)"></div>
<svg style="left:1099px;top:469px" width="10" height="9" viewBox="0 0 10 9"><path d="M1 1 L9 8 M9 1 L1 8" stroke="#a8a8a8" stroke-width="2"/></svg>
<svg style="left:817px;top:499px" width="31" height="31" viewBox="0 0 31 31">
  <circle cx="15.5" cy="15.5" r="15" fill="#1064b8"/>
  <text x="15.5" y="25" font-family="Liberation Sans" font-size="24" text-anchor="middle" fill="#fff">?</text>
</svg>
<div class="b hatch" style="left:879px;top:543px;width:75px;height:23px;border:1px solid #a8a8a8"></div>
<div class="b" style="left:882px;top:546px;width:69px;height:17px;border:1px dotted #222"></div>
<div class="b hatch" style="left:966px;top:543px;width:75px;height:23px;border:1px solid #a8a8a8"></div>
<div class="t" style="left:809.74px;top:469px;font-size:11px;font-weight:700;color:#151515;line-height:11px;-webkit-text-stroke:0.3px #151515;transform:scaleX(1.0791);transform-origin:0 0">Phần mềm MekonSoft.</div>
<div class="t" style="left:859.33px;top:510px;font-size:11px;font-weight:400;color:#202020;line-height:11px;transform:scaleX(0.9591);transform-origin:0 0">Bạn có chắc muốn xóa các dòng được chọn không?</div>
<div class="t" style="left:906.93px;top:550px;font-size:11px;font-weight:400;color:#202020;line-height:11px;transform:scaleX(0.9636);transform-origin:0 0">Yes</div>
<div class="t" style="left:995.72px;top:550px;font-size:11px;font-weight:400;color:#202020;line-height:11px;transform:scaleX(0.9671);transform-origin:0 0">No</div>
<svg style="left:913px;top:566px" width="13" height="20" viewBox="0 0 13 20">
  <path d="M0.5 0.5 V16 L4 12.5 L7 19 L9.5 18 L6.5 11.5 L11.5 11.5 Z" fill="#fff" stroke="#111" stroke-width="1"/>
</svg>
</body></html>
